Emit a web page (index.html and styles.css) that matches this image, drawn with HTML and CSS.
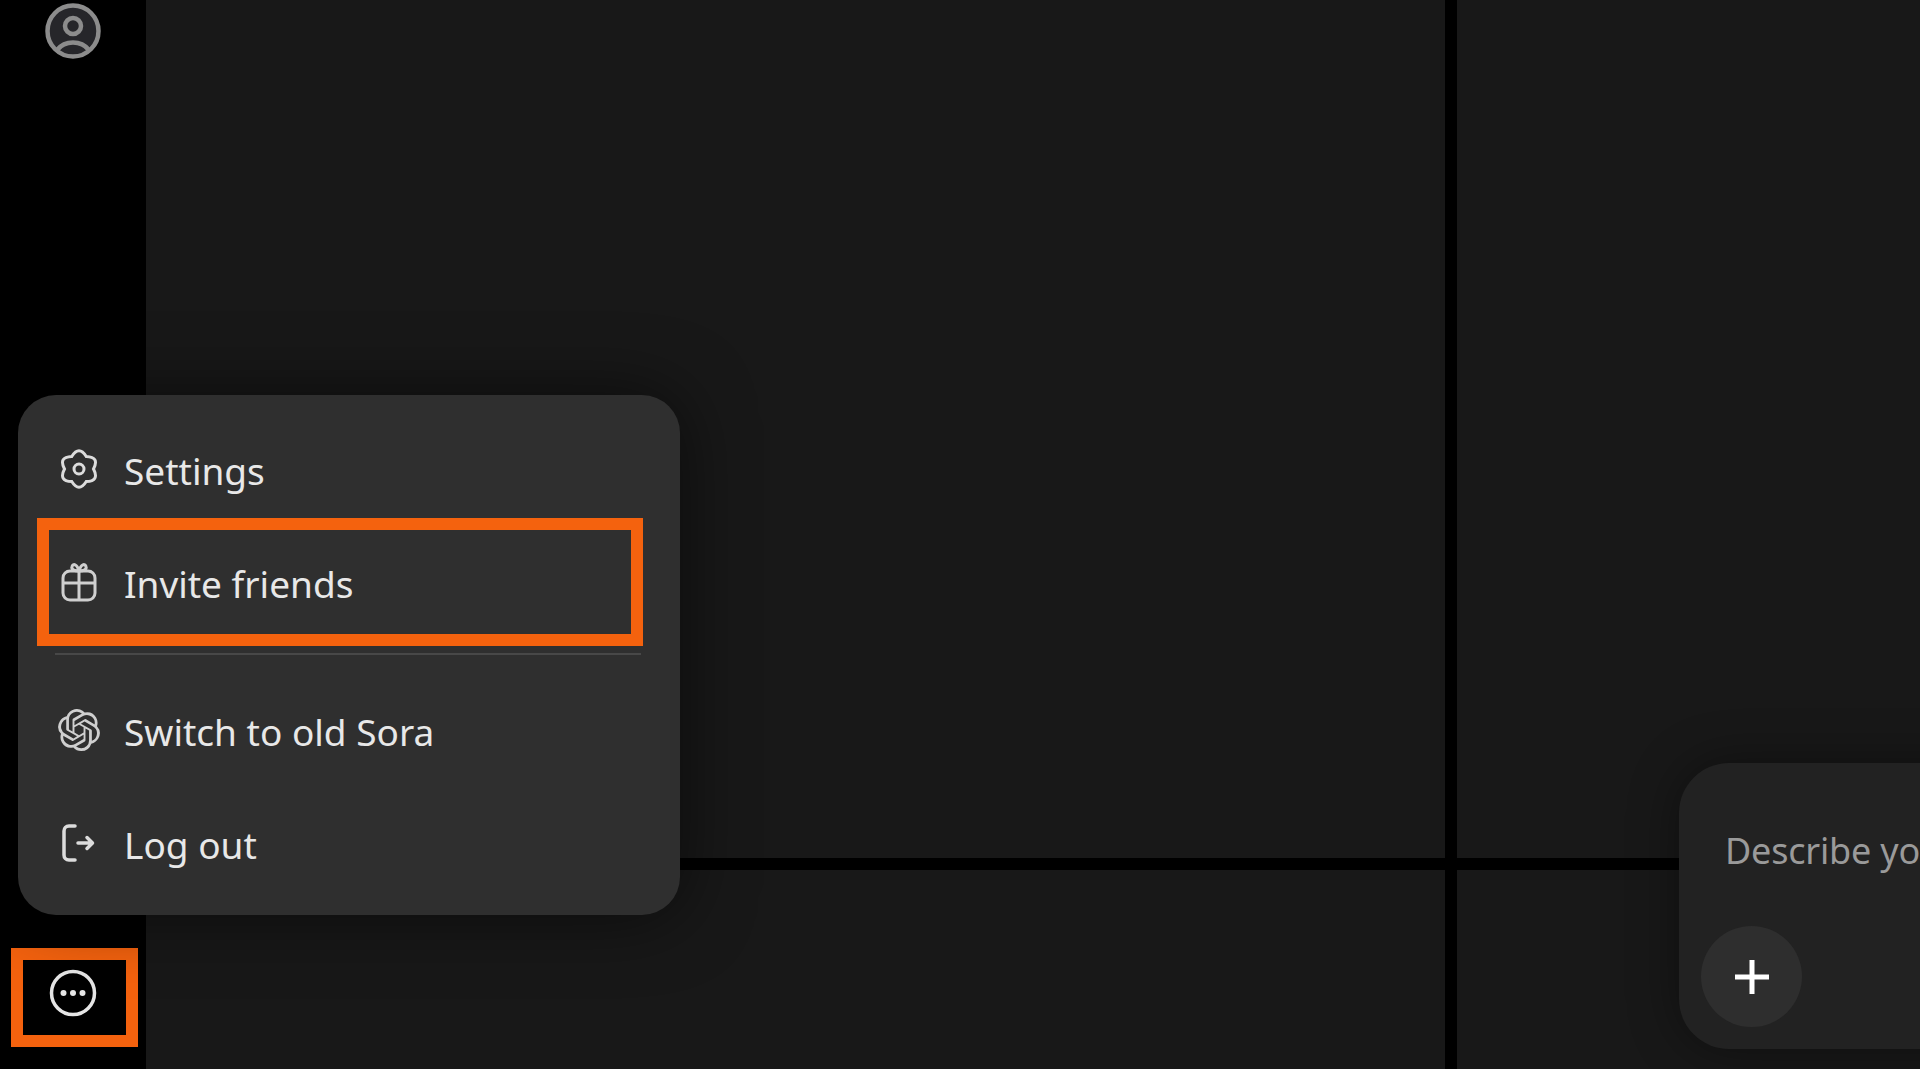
FILE: index.html
```html
<!DOCTYPE html>
<html lang="en">
  <head>
    <meta charset="UTF-8" />
    <meta name="viewport" content="width=device-width, initial-scale=1.0" />
    <title>Sora - account menu</title>
    <link rel="stylesheet" href="styles.css">
  </head>
  <body>
    <div class="app">
      <aside class="sidebar">
        <button class="avatar-btn" aria-label="Profile">
          <svg class="avatar-icon" viewBox="0 0 56 56" fill="none" stroke="#8c8c8c" stroke-width="4.5">
            <circle cx="28" cy="28" r="25.5" fill="#26262a" />
            <circle cx="28" cy="23" r="8" />
            <path d="M12 47c4-5 10-7.500 16-7.500s12 2.500 16 7.500" />
          </svg>
        </button>
        <button class="more-btn" aria-label="More">
          <svg class="more-icon" viewBox="0 0 48 48" fill="none">
            <circle cx="24" cy="24" r="21.5" stroke="#e6e6e6" stroke-width="3.5" />
            <circle cx="14.5" cy="24" r="3" fill="#e6e6e6" />
            <circle cx="24" cy="24" r="3" fill="#e6e6e6" />
            <circle cx="33.5" cy="24" r="3" fill="#e6e6e6" />
          </svg>
        </button>
      </aside>

      <main class="tiles">
        <div class="tile"></div>
        <div class="tile"></div>
        <div class="tile"></div>
        <div class="tile"></div>
      </main>
    </div>

    <!-- popup above the more button -->
    <div class="menu">
      <div class="menu-item">
        <svg class="menu-icon" viewBox="0 0 36 40" fill="none" stroke="#dcdcdc" stroke-width="3">
          <path d="M10.75 7.44Q18 -4 25.25 7.44Q38.800 8 32.500 20Q38.800 32 25.25 32.56Q18 44 10.75 32.56Q-2.800 32 3.500 20Q-2.800 8 10.75 7.44Z" />
          <circle cx="18" cy="20" r="5" />
        </svg>
        <span>Settings</span>
      </div>
      <div class="menu-item highlighted">
        <svg class="menu-icon" viewBox="0 0 36 40" fill="none" stroke="#cfcfcf" stroke-width="3">
          <rect x="2" y="9" width="32" height="29" rx="7" />
          <path d="M2 21H34M18 9V38" />
          <path d="M18 9C13 9 10 7 11 4.500C12 1.500 16 1.500 18 9C20 1.500 24 1.500 25 4.500C26 7 23 9 18 9Z" />
        </svg>
        <span>Invite friends</span>
      </div>
      <div class="menu-divider"></div>
      <div class="menu-item">
        <svg class="menu-icon logo" viewBox="0 0 24 24" fill="#cfcfcf">
          <path d="M22.2819 9.8211a5.9847 5.9847 0 0 0-.5157-4.9108 6.0462 6.0462 0 0 0-6.5098-2.9A6.0651 6.0651 0 0 0 4.9807 4.1818a5.9847 5.9847 0 0 0-3.9977 2.9 6.0462 6.0462 0 0 0 .7427 7.0966 5.98 5.98 0 0 0 .511 4.9107 6.051 6.051 0 0 0 6.5146 2.9001A5.9847 5.9847 0 0 0 13.2599 24a6.0557 6.0557 0 0 0 5.7718-4.2058 5.9894 5.9894 0 0 0 3.9977-2.9001 6.0557 6.0557 0 0 0-.7475-7.0729zm-9.022 12.6081a4.4755 4.4755 0 0 1-2.8764-1.0408l.1419-.0804 4.7783-2.7582a.7948.7948 0 0 0 .3927-.6813v-6.7369l2.02 1.1686a.071.071 0 0 1 .038.052v5.5826a4.504 4.504 0 0 1-4.4945 4.4944zm-9.6607-4.1254a4.4708 4.4708 0 0 1-.5346-3.0137l.142.0852 4.783 2.7582a.7712.7712 0 0 0 .7806 0l5.8428-3.3685v2.3324a.0804.0804 0 0 1-.0332.0615L9.74 19.9502a4.4992 4.4992 0 0 1-6.1408-1.6464zM2.3408 7.8956a4.485 4.485 0 0 1 2.3655-1.9728V11.6a.7664.7664 0 0 0 .3879.6765l5.8144 3.3543-2.0201 1.1685a.0757.0757 0 0 1-.071 0l-4.8303-2.7865A4.504 4.504 0 0 1 2.3408 7.872zm16.5963 3.8558L13.1038 8.364 15.1192 7.2a.0757.0757 0 0 1 .071 0l4.8303 2.7913a4.4944 4.4944 0 0 1-.6765 8.1042v-5.6772a.79.79 0 0 0-.407-.667zm2.0107-3.0231l-.142-.0852-4.7735-2.7818a.7759.7759 0 0 0-.7854 0L9.409 9.2297V6.8974a.0662.0662 0 0 1 .0284-.0615l4.8303-2.7866a4.4992 4.4992 0 0 1 6.6802 4.66zM8.3065 12.863l-2.02-1.1638a.0804.0804 0 0 1-.038-.0567V6.0742a4.4992 4.4992 0 0 1 7.3757-3.4537l-.142.0805L8.704 5.459a.7948.7948 0 0 0-.3927.6813zm1.0976-2.3654l2.602-1.4998 2.6069 1.4998v2.9994l-2.5974 1.4997-2.6067-1.4997Z" />
        </svg>
        <span>Switch to old Sora</span>
      </div>
      <div class="menu-item">
        <svg class="menu-icon" viewBox="0 0 36 40" fill="none" stroke="#dcdcdc" stroke-width="3.5" stroke-linecap="round" stroke-linejoin="round">
          <path d="M14 3H8C5 3 3 5 3 8V32C3 35 5 37 8 37H14" />
          <path d="M17 20H31M26 14.500L31.500 20L26 25.500" />
        </svg>
        <span>Log out</span>
      </div>
    </div>

    <!-- prompt box, runs off the right edge -->
    <div class="composer">
      <div class="composer-text">Describe your video...</div>
      <button class="add-btn" aria-label="Add">
        <svg viewBox="0 0 36 36" class="add-icon" stroke="#fff" stroke-width="5">
          <path d="M18 1V35M1 18H35" />
        </svg>
      </button>
    </div>
  </body>
</html>
```

FILE: styles.css
```css
* {
  box-sizing: border-box;
}
html,
body {
  margin: 0;
  padding: 0;
  height: 100%;
  overflow: hidden;
  background-color: #000;
}
body {
  font-family: "Noto Sans", "Open Sans", sans-serif;
}
button {
  background: none;
  border: 0;
  padding: 0;
}
.app {
  display: flex;
  height: 100vh;
}

/* sidebar */
.sidebar {
  width: 146px;
  flex-shrink: 0;
  display: flex;
  flex-direction: column;
  justify-content: space-between;
  align-items: center;
  padding: 3px 0 22px;
}
.avatar-btn {
  display: block;
  width: 56px;
  height: 56px;
}
.avatar-icon {
  display: block;
  width: 56px;
  height: 56px;
}
.more-btn {
  width: 127px;
  height: 99px;
  margin-left: 2px;
  padding: 0 3px 10px 0;
  border: 12px solid #f4620e;
  display: flex;
  align-items: center;
  justify-content: center;
}
.more-icon {
  width: 48px;
  height: 48px;
}

/* tiles */
.tiles {
  flex: 1;
  display: grid;
  grid-template-columns: 1299px 1fr;
  grid-template-rows: 858px 1fr;
  gap: 12px;
}
.tile {
  background-color: #181818;
}

/* menu */
.menu {
  position: absolute;
  left: 18px;
  top: 395px;
  width: 662px;
  height: 520px;
  padding: 20px 37px 14px 19px;
  background-color: #2f2f2f;
  border-radius: 38px;
  box-shadow: 0 0 70px rgba(0, 0, 0, 0.55);
}
.menu-item {
  position: relative;
  height: 113px;
  display: flex;
  align-items: center;
  gap: 27px;
  padding-left: 24px;
  color: #e8e8e8;
  font-size: 37px;
}
.menu-item span {
  margin-bottom: 2px;
}
.menu-icon {
  width: 36px;
  height: 40px;
  flex-shrink: 0;
  margin-bottom: 6px;
}
.menu-icon.logo {
  width: 42px;
  height: 42px;
  margin-left: -3px;
  margin-right: -3px;
}
.highlighted::after {
  content: "";
  position: absolute;
  left: 0;
  right: 0;
  top: -10px;
  bottom: -5px;
  border: 12px solid #f4620e;
}
.menu-divider {
  height: 2px;
  margin: 12px 2px 21px 18px;
  background-color: #484848;
}

/* composer */
.composer {
  position: absolute;
  left: 1679px;
  top: 763px;
  width: 400px;
  height: 286px;
  padding: 63px 0 0 46px;
  background-color: #222;
  border-radius: 50px;
  box-shadow: 0 0 50px rgba(0, 0, 0, 0.4);
}
.composer-text {
  color: #9a9a9a;
  font-size: 36px;
  letter-spacing: -0.2px;
  white-space: nowrap;
}
.add-btn {
  position: absolute;
  left: 22px;
  top: 163px;
  width: 101px;
  height: 101px;
  border-radius: 50%;
  background-color: #2e2e2e;
  display: flex;
  align-items: center;
  justify-content: center;
}
.add-icon {
  width: 36px;
  height: 36px;
}
```
